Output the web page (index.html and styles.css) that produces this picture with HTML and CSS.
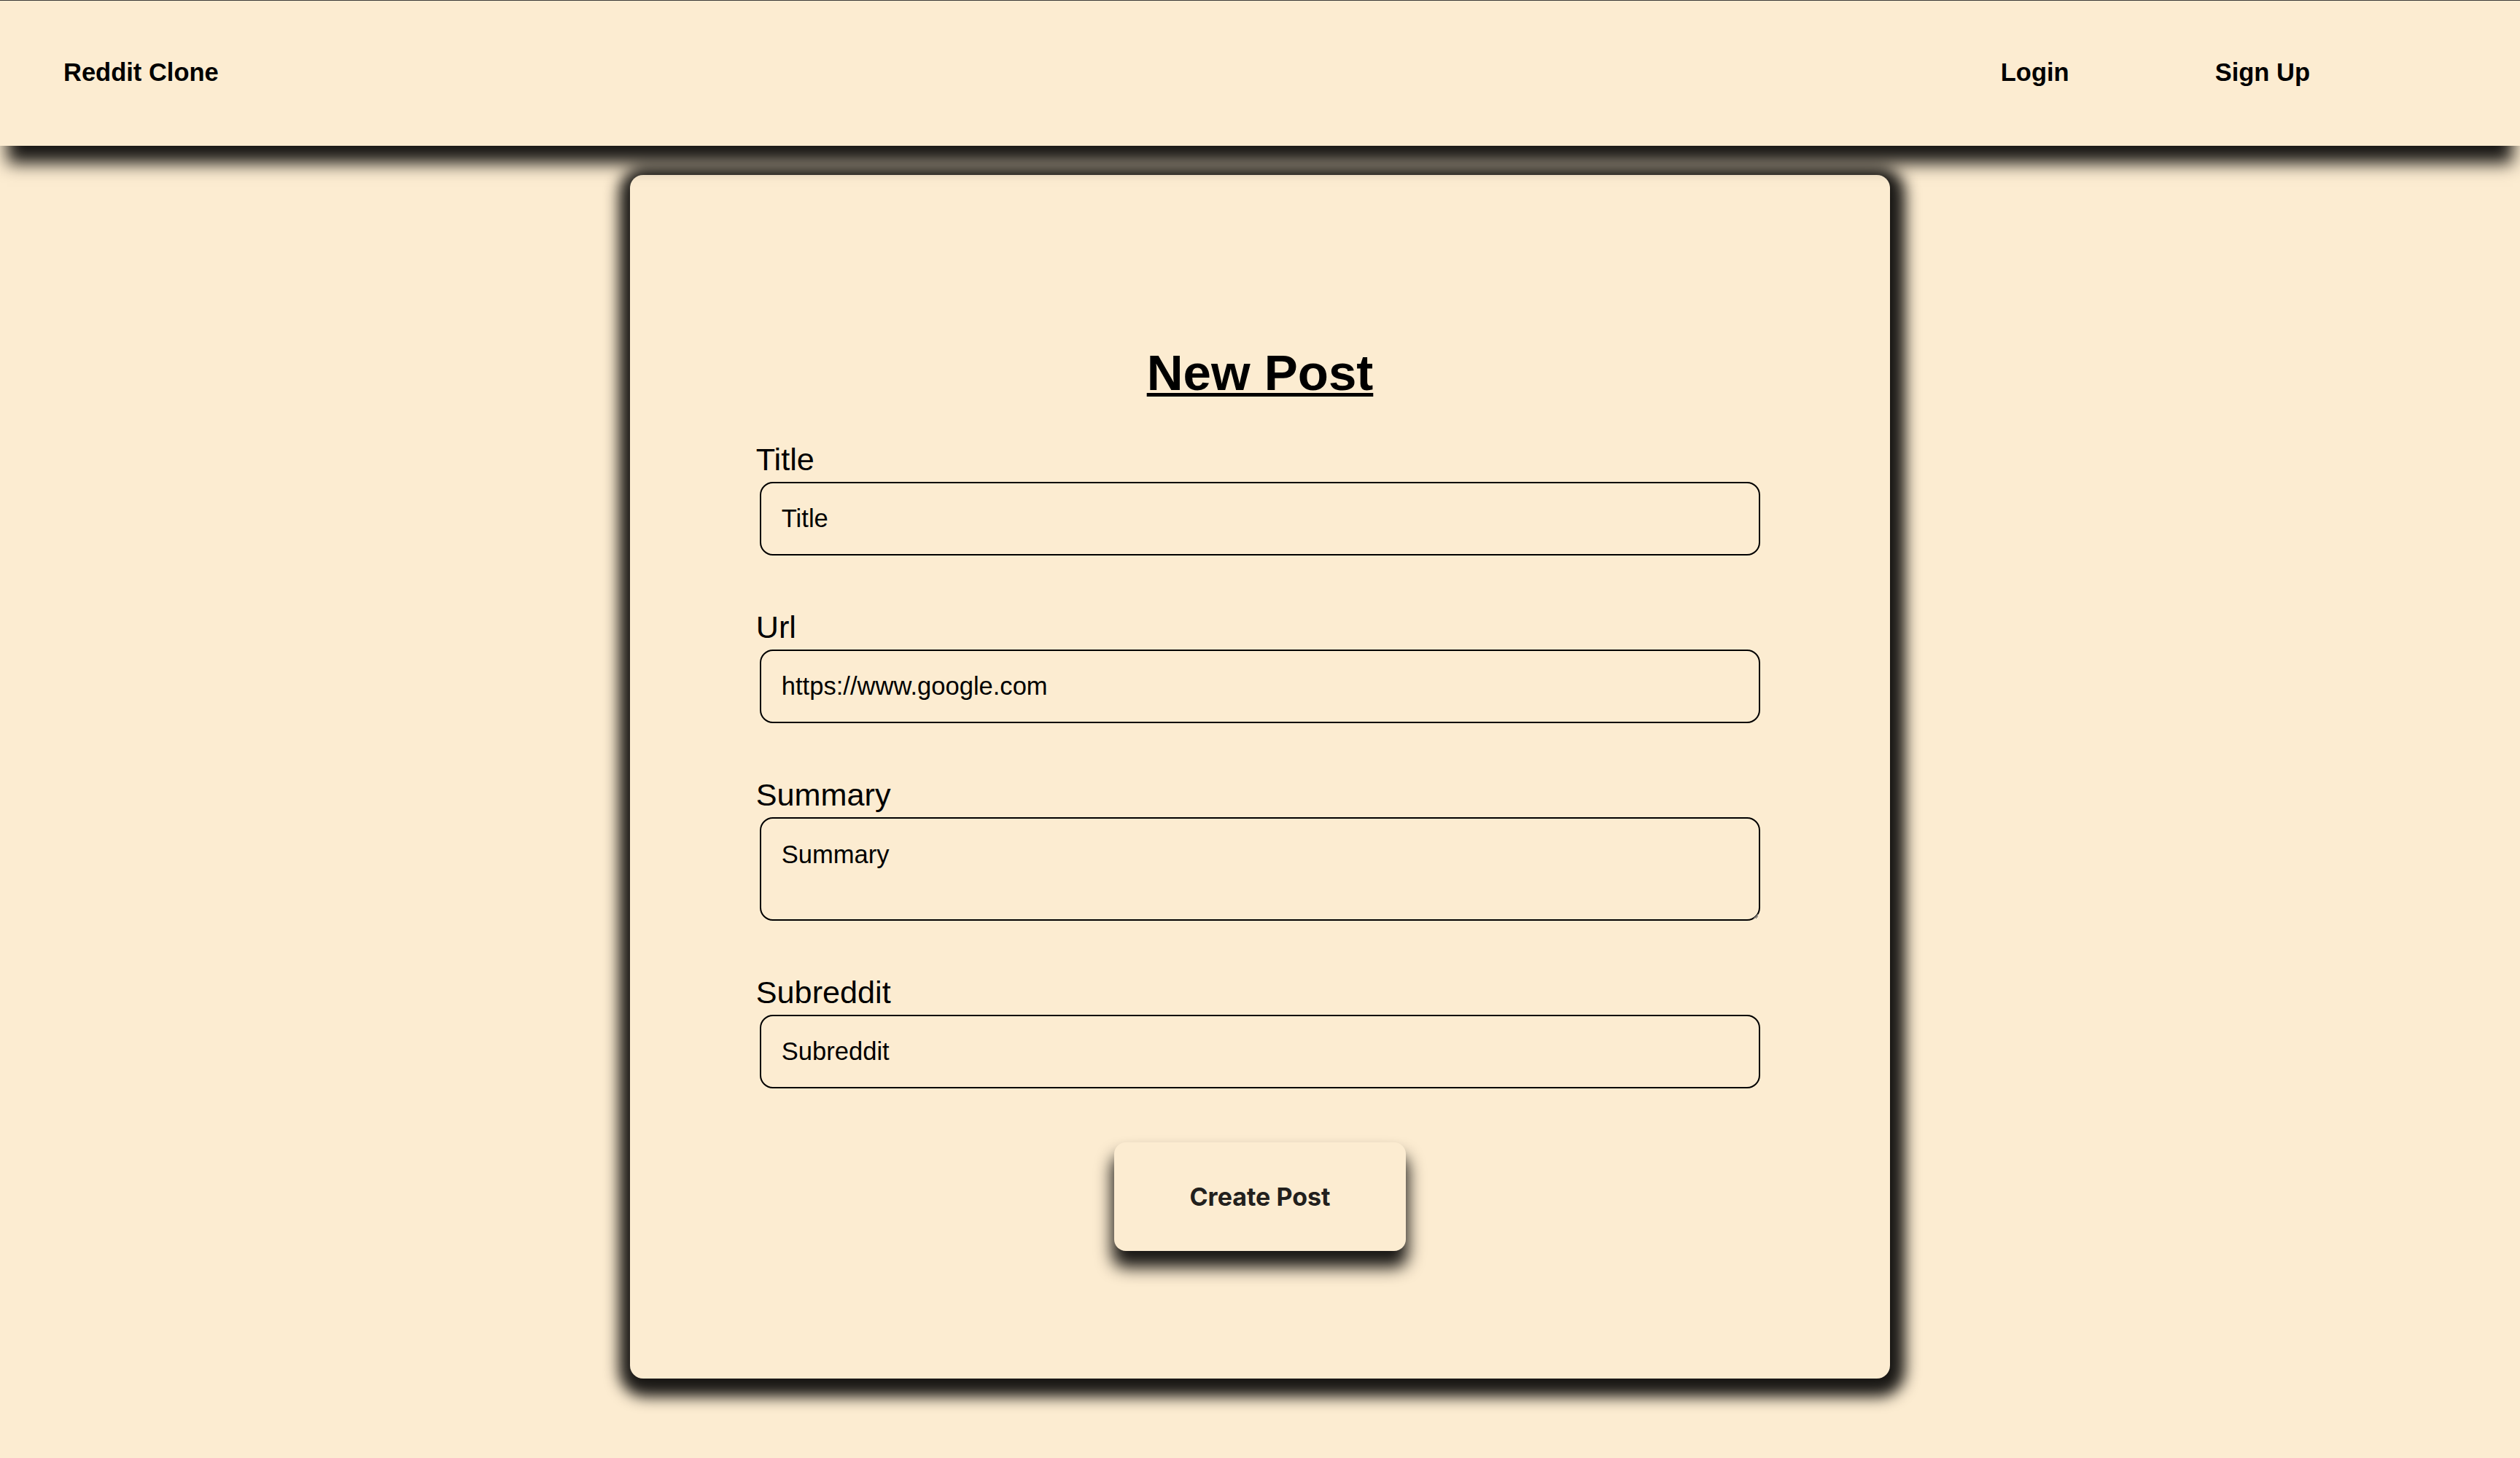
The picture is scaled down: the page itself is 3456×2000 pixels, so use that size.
FILE: index.html
```html
<!DOCTYPE html>
<html lang="en">
<head>
<meta charset="utf-8">
<title>Reddit Clone - New Post</title>
<link rel="stylesheet" href="styles.css">
</head>
<body>
<header class="navbar">
  <a class="brand" href="#">Reddit Clone</a>
  <nav class="nav-links">
    <a class="nav-link" href="#">Login</a>
    <a class="nav-link" href="#">Sign Up</a>
  </nav>
</header>
<main class="page">
  <section class="card">
    <h1 class="card-title">New Post</h1>
    <form class="post-form">
      <div class="field">
        <label class="field-label" for="title">Title</label>
        <input class="field-input" id="title" type="text" placeholder="Title">
      </div>
      <div class="field">
        <label class="field-label" for="url">Url</label>
        <input class="field-input" id="url" type="text" placeholder="https://www.google.com">
      </div>
      <div class="field">
        <label class="field-label" for="summary">Summary</label>
        <textarea class="field-input field-textarea" id="summary" placeholder="Summary"></textarea>
      </div>
      <div class="field">
        <label class="field-label" for="subreddit">Subreddit</label>
        <input class="field-input" id="subreddit" type="text" placeholder="Subreddit">
      </div>
      <button class="submit" type="button">Create Post</button>
    </form>
  </section>
</main>
</body>
</html>
```
FILE: styles.css
```css
html, body {
  margin: 0;
  padding: 0;
  background: #fcecd1;
}

body {
  font-family: "Liberation Sans", Arial, Helvetica, sans-serif;
  color: #000;
}

.navbar {
  position: relative;
  z-index: 1;
  height: 200px;
  box-sizing: border-box;
  border-top: 1px solid #3b3a38;
  background: #fcecd1;
  display: flex;
  align-items: center;
  justify-content: space-between;
  padding: 0 288px 2px 87px;
  box-shadow: 0 34px 22px -10px rgba(0, 0, 0, 0.9);
}

.brand,
.nav-link {
  font-size: 34.5px;
  font-weight: 700;
  color: #000;
  text-decoration: none;
}

.nav-links {
  display: flex;
  gap: 200px;
}

.page {
  padding-bottom: 60px;
}

.card {
  width: 1728px;
  margin: 40px auto 0;
  box-sizing: border-box;
  padding: 232px 0 175px;
  background: #fcecd1;
  border-radius: 18px;
  box-shadow: 3px 7px 20px 18px rgba(0, 0, 0, 0.9);
}

.card-title {
  margin: 0 0 55px;
  text-align: center;
  font-size: 69px;
  font-weight: 700;
  line-height: normal;
  text-decoration: underline;
  text-decoration-thickness: 5px;
  text-underline-offset: 4px;
}

.post-form {
  width: 80%;
  margin: 0 auto;
  display: flex;
  flex-direction: column;
}

.field {
  display: flex;
  flex-direction: column;
  margin-bottom: 68px;
}

.field-label {
  font-size: 43.2px;
  line-height: normal;
  color: #000;
}

.field-input {
  display: block;
  margin: 6px 5px;
  height: 101px;
  box-sizing: border-box;
  border: 2px solid #000;
  border-radius: 18px;
  background: transparent;
  padding: 0 28px;
  font-family: "Liberation Sans", Arial, Helvetica, sans-serif;
  font-size: 34.56px;
  color: #000;
  outline: none;
}

.field-input::placeholder {
  color: #000;
  opacity: 1;
}

.field-textarea {
  height: 142px;
  padding: 30px 28px;
  line-height: normal;
}

.submit {
  align-self: center;
  width: 400px;
  height: 149px;
  border: none;
  border-radius: 16px;
  background: #fcecd1;
  font-family: Inter, "Liberation Sans", sans-serif;
  font-size: 34px;
  font-weight: 700;
  color: #22201d;
  box-shadow: 0 20px 22px 3px rgba(0, 0, 0, 0.9);
  cursor: pointer;
}
```
